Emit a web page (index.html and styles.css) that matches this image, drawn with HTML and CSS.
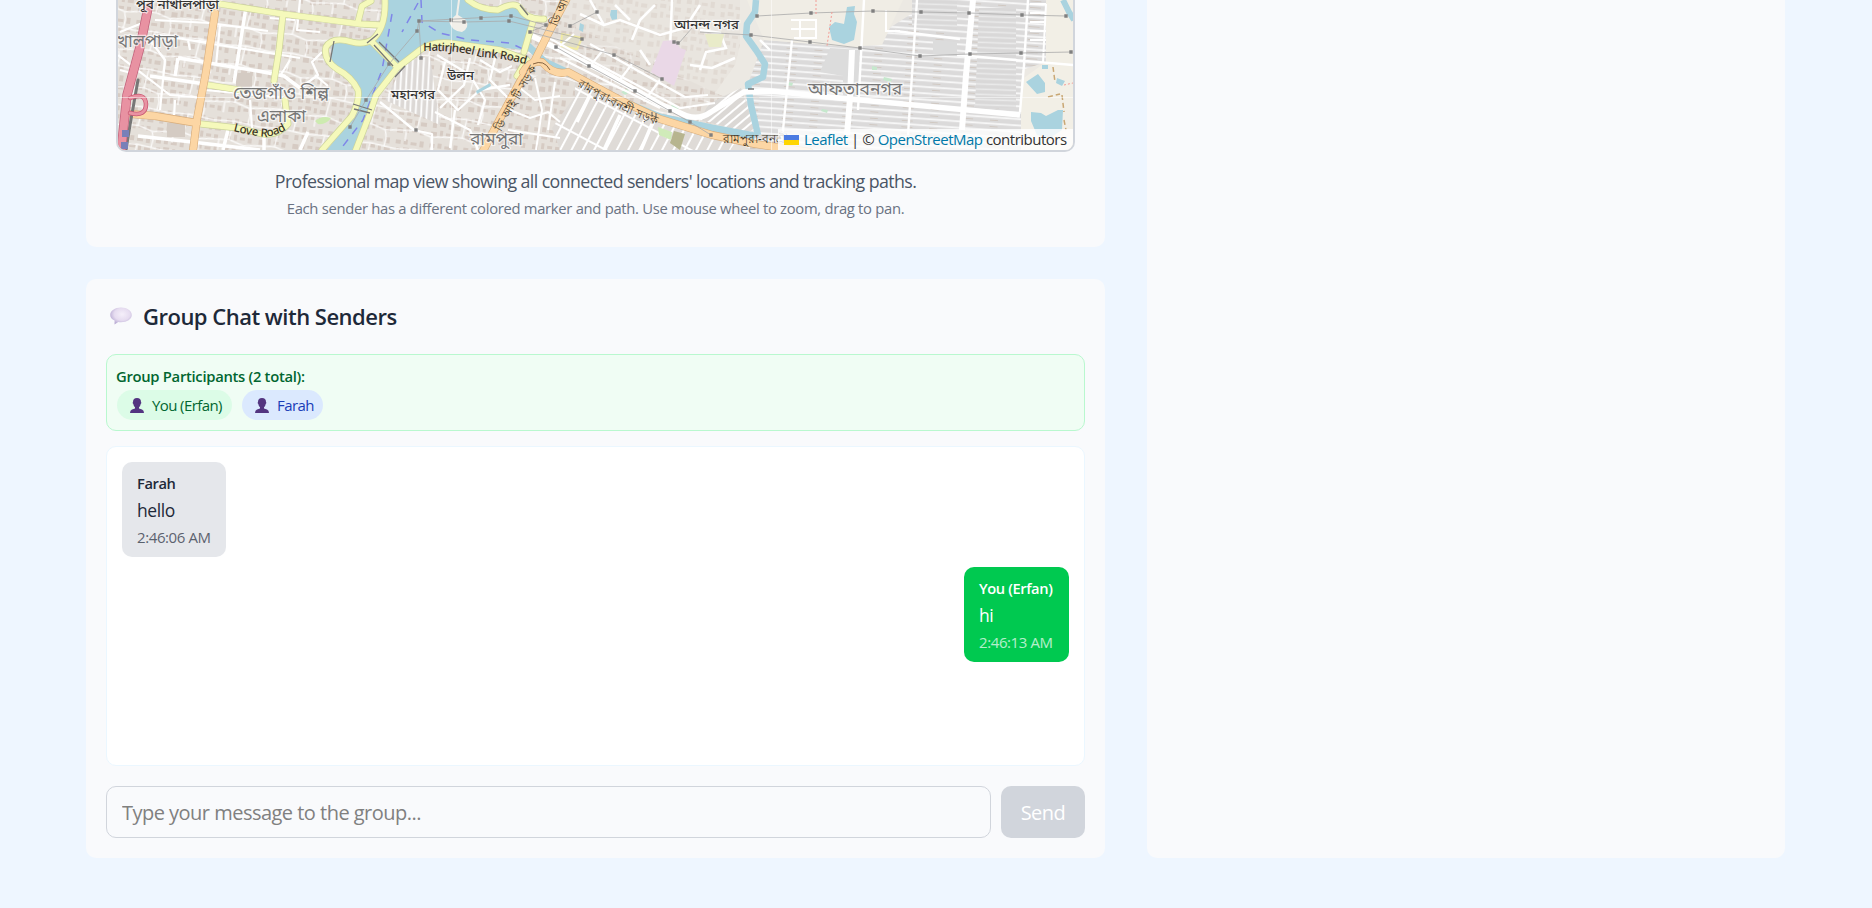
FILE: index.html
```html
<!DOCTYPE html>
<html lang="en">
<head>
<meta charset="utf-8">
<title>Group Chat</title>
<link rel="stylesheet" href="styles.css">
</head>
<body>
<main class="layout">
  <div class="column">
    <section class="card map-card">
      <div class="map">
        <svg class="tiles" viewBox="118 0 955 150" width="955" height="150">
          <defs>
            <pattern id="blocks" width="34" height="29" patternUnits="userSpaceOnUse" patternTransform="rotate(7)">
              <rect width="34" height="29" fill="#e5e0da"/>
              <path d="M2 3h5v4h-5zM10 2h4v5h-4zM17 4h6v3h-6zM26 2h4v6h-4zM3 11h4v5h-4zM10 10h6v4h-6zM19 11h3v5h-3zM25 12h6v4h-6zM2 20h6v5h-6zM11 18h3v6h-3zM17 20h5v3h-5zM25 20h4v5h-4z" fill="#d6cbc3"/>
            </pattern>
            <pattern id="lanes" width="46" height="38" patternUnits="userSpaceOnUse" patternTransform="rotate(9)">
              <path d="M0 9L20 7L46 9M20 7L18 26M0 28L18 26L33 30L46 28M33 30L35 38M35 0L34 9M8 28V38" fill="none" stroke="#fff" stroke-opacity=".8" stroke-width="1.4"/>
            </pattern>
            <pattern id="rows" width="60" height="6.4" patternUnits="userSpaceOnUse" patternTransform="rotate(4)">
              <rect width="60" height="6.4" fill="#dbdada"/>
              <path d="M0 3H60" stroke="#f8f8f8" stroke-width="1.7"/>
              <path d="M8 6H19M36 6H44" stroke="#d0c8c1"/>
            </pattern>
            <pattern id="fine" width="60" height="5.2" patternUnits="userSpaceOnUse" patternTransform="rotate(2)">
              <rect width="60" height="5.2" fill="#d9d8d8"/>
              <path d="M0 3H60" stroke="#eaeaea" stroke-width="1.5"/>
            </pattern>
            <pattern id="diag" width="10" height="40" patternUnits="userSpaceOnUse" patternTransform="rotate(28)">
              <rect width="10" height="40" fill="#dfdbd7"/>
              <path d="M5 0V40M0 8H10" stroke="#fff" stroke-width="2"/>
            </pattern>
            <pattern id="fan" width="40" height="7" patternUnits="userSpaceOnUse" patternTransform="rotate(-40)">
              <rect width="40" height="7" fill="#dbd8d5"/>
              <path d="M0 3H40" stroke="#fff" stroke-width="2"/>
            </pattern>
            <pattern id="cols" width="5.5" height="60" patternUnits="userSpaceOnUse" patternTransform="rotate(3)">
              <rect width="5.5" height="60" fill="#dcd8d5"/>
              <path d="M3 0V60" stroke="#fff" stroke-width="1.8"/>
            </pattern>
            <path id="secondary" d="M220 4L283 14L360 24L380 25M283 14L279 50L274 81M208 85L240 90M201 124L238 128L262 134Q278 136 288 124L285 100M385 0Q386 28 372 40Q363 45 352 42Q332 36 326 47Q323 60 337 69Q352 77 358 90Q360 100 352 116L322 150M372 42L397 67M420 50L397 68L376 95L369 116L355 152M420 50Q432 41 450 43L500 50L527 60M468 0Q480 10 498 10Q514 1 520 8Q526 20 544 19M358 22L362 6L371 1M533 21L524 52M524 64L517 76"/>
            <path id="primary" d="M215 13L206 72L197 119L193 151M132 114L155 116L197 123M567 -2L550 30L535 60L521 80L502 115L483 151M523 72Q530 60 542 62Q554 76 568 72L620 100L660 119L712 135L755 144L810 152"/>
          </defs>

          <!-- Land -->
          <rect x="118" width="955" height="150" fill="url(#blocks)"/>
          <rect x="118" width="955" height="150" fill="url(#lanes)"/>
          <path d="M570 0H1073V150H990L720 95L620 48L560 20Z" fill="#ece9e3"/>
          <path d="M570 0H740V45L735 65L710 100L680 112L620 80L545 45Z" fill="url(#blocks)" opacity=".5"/>
          <path d="M590 0L604 25L620 20L660 35L685 28L700 5M632 40L640 20L655 5M672 0L670 50L655 62M700 30L720 33L726 48L706 52L700 70M615 5L630 20M580 14L604 25M640 50L650 65M690 65L712 68L735 58" fill="none" stroke="#fff" stroke-width="2.5"/>
          <path d="M405 62L430 56L440 125L385 100Z" fill="url(#cols)"/>
          <path d="M764 40L860 47L925 5V0H1046V62L1022 70V150H750L745 92Z" fill="url(#rows)"/>
          <path d="M862 62L957 67L955 108L855 101Z" fill="url(#rows)"/>
          <path d="M979 8H1016V108H975Z" fill="url(#fine)"/>
          <path d="M912 0H957V30L912 27Z" fill="url(#fine)"/>
          <path d="M830 48L860 50L858 98L843 98V76L820 72Z" fill="#dcdcdc"/>
          <path d="M933 40L957 42V56L933 54Z" fill="#dcdcdc"/>
          <path d="M747 0H862V48L764 40Z" fill="#f0ede5"/>
          <path d="M862 0H903L882 45L862 46Z" fill="#f0ede5"/>
          <path d="M1046 0H1073V150H1021V80L1046 62Z" fill="#f2efe6"/>
          <path d="M720 98L741 88L756 130L745 132L700 120L708 105Z" fill="url(#fan)"/>
          <path d="M540 74L575 82L680 125L735 143L730 150H500Z" fill="url(#diag)"/>
          <path d="M540 74L575 82L575 96L552 128L560 150H490L522 85Z" fill="url(#blocks)"/>
          <path d="M520 88L535 100L560 96M510 110L530 118L548 112L560 122M535 78L542 110L536 150M508 130L560 138M555 82L548 130" fill="none" stroke="#fff" stroke-width="2"/>
          <path d="M562 34L582 38L577 49L561 46Z" fill="#dfdcc7" stroke="#f1eba4" stroke-width="2"/>
          <path d="M663 41L675 40L680 48L686 50L674 86L651 72Z" fill="#ead8e7"/>
          <path d="M705 34L724 34L721 47L709 47Z" fill="#e9ebc9"/>
          <path d="M658 127L672 132L671 140L659 135Z" fill="#d0ebb9"/><path d="M674 131L685 134L680 150L670 143Z" fill="#b7b58f"/>
          <path d="M621 92l6-3 3 3-5 3zM672 104l7 3-2 3-6-2zM788 82l5 1-1 3-5-1zM872 66l5 1v3h-5zM884 77l8 2-1 3-8-2zM822 109l6 1-1 3-6-2z" fill="#c6e8cd"/>
          <path d="M236 73h16v14h-16zM167 123h18v14h-18z" fill="#d4cbc3"/>
          <path d="M315 121Q322 115 331 118Q326 125 318 124Z" fill="#cdebb0"/>

          <!-- Local streets, west -->
          <g fill="none" stroke="#fff" stroke-linejoin="round">
            <path d="M246 7L240 45L234 83M178 58L258 71L284 76L300 88M178 58L175 76M150 76L205 84M138 136L192 142L260 150M264 133V150M228 130L223 150M300 150L308 132" stroke-width="3.5"/>
            <path d="M155 20L210 23L268 31M160 35L200 42L300 58M120 32L145 22M118 55L170 95L205 98M150 40L165 60L160 110M190 50L188 40L210 42M205 90L290 98M300 0L297 30L320 32M295 20L270 18M300 88L318 75L312 62L322 52M280 76L290 60M250 100L252 128M175 100L174 117M220 25L216 65M120 70L135 74M315 75L328 86" stroke-width="2.2"/>
            <path d="M380 102L414 130L432 134V150M437 55L470 75L485 100L478 125M445 62L438 90L458 110L480 90L510 85M470 58L464 85L440 108M495 58L490 80L510 100M435 112L470 130L478 150M455 110L450 148M480 60L500 72L512 66" stroke-width="2.3"/>
          </g>

          <!-- Water -->
          <g fill="#aad3df">
            <path d="M388 0H466Q475 10 500 10Q512 4 520 8L533 22L529 40L522 50Q470 43 440 43Q424 45 405 62L379 95L357 150H327L353 116Q363 95 354 82Q333 67 331 57L332 40Q356 48 370 45Q384 33 387 18Z"/>
            <path d="M526 44L545 62L575 76L622 101L660 117L712 128L755 136" fill="none" stroke="#aad3df" stroke-width="7"/>
            <path d="M756 0L755 12L747 24L746 36L756 50L765 64L763 77L748 84L751 105L758 135" fill="none" stroke="#aad3df" stroke-width="6.5" stroke-linejoin="round"/>
            <path d="M1063 0L1069 12L1074 20" fill="none" stroke="#aad3df" stroke-width="6"/>
            <path d="M611 10h6v9l-5 1-2-5zM580 23l4 2-1 7-4-2zM476 91l14-8 1 3-9 5-5 3zM847 7l8-1-1 8 3 8-3 18-10 4-12-4-3-13 6-5 9 2z"/>
            <path d="M1026 82l12-8 7 9v9l-8 2zM1031 112l10 1 5 3 12-6 5 0-1 20-12 8-13-3-6-14zM1057 78l8 3-3 5-6-3zM1042 65h6v4h-6z"/>
          </g>
          <path d="M458 0L456 15L449 21Q451 31 462 32Q470 28 466 20L458 15L460 0" fill="#f2efe9"/>
          <path d="M392 14L382 70L363 120L340 150M421 0L422 22L440 33L470 40L510 43L523 49M418 3L402 32" fill="none" stroke="#7f86e8" stroke-width="1.5" stroke-dasharray="8 7"/>

          <!-- Canal-side and eastern streets -->
          <g fill="none" stroke="#fff">
            <path d="M532 36L600 70L660 104L687 116Q700 120 711 112L744 92L770 91L850 99L1020 115" stroke-width="5.5"/>
            <path d="M545 36L650 92L680 108L715 103M560 58L660 108M560 46L574 34M590 66L604 49M619 81L632 64M648 96L660 80M590 44L685 97L708 95" stroke-width="2.2"/>
            <path d="M864 0L858 110M917 0L908 135M1028 0L1024 65L1020 112M957 55L1073 65M792 40L782 140M770 50L760 40M895 31L960 39" stroke-width="2.4"/>
            <path d="M852 50L850 98L847 135M973 0L966 75L962 130" stroke-width="6"/>
            <path d="M1046 4L1043 62M1030 4H1046M1030 13H1046M1030 22H1046M1030 31H1046M1030 40H1046M791 20H816V38H794M800 20V38M791 29H816M886 10V31H900" stroke-width="2"/>
            <path d="M590 95L577 122M620 115L604 150M652 124L641 150" stroke-width="3.5"/>
          </g>

          <!-- Main roads: casing, then fill -->
          <g fill="none" stroke-linejoin="round" stroke-linecap="round">
            <use href="#secondary" stroke="#ccd49b" stroke-width="6.8"/>
            <use href="#secondary" stroke="#f5f9bb" stroke-width="5.4"/>
            <use href="#primary" stroke="#d8ad7b" stroke-width="8"/>
            <use href="#primary" stroke="#fcd6a4" stroke-width="6.8"/>
            <path d="M138 80L130 125L126 150" stroke="#777" stroke-width="3"/>
            <path d="M148 8L140 47L127 95L121 152" stroke="#c0607a" stroke-width="9.4"/>
            <path d="M148 8L140 47L127 95L121 152" stroke="#e892a2" stroke-width="8"/>
            <path d="M130 98Q145 92 146 104Q146 117 130 113" stroke="#c95772" stroke-width="4.5"/>
            <path d="M130 98Q145 92 146 104Q146 117 130 113" stroke="#e892a2" stroke-width="3"/>
          </g>
          <path d="M122 130h7v7h-7zM121 142h7v7h-7z" fill="#7780b8"/>

          <!-- Bridges -->
          <path d="M334 41L330 62M374 45L393 66M379 42L399 62M353 104L372 110M354 109L370 113M378 34L367 43M405 66L395 77M520 5L528 15M748 89H754M652 112V117M656 113V118" fill="none" stroke="#777" stroke-width="1.3"/>
          <path d="M533 64Q544 59 550 70" fill="none" stroke="#846340"/>

          <!-- Power lines -->
          <path d="M350 127L366 100L389 64L417 31L419 21L511 16L546 25L530 32L615 55L662 79M421 58L419 21L464 22L509 21L582 39M570 26L597 12M556 47L589 66L635 91L670 111L690 122L711 135M674 42L679 43L692 28M757 16L811 13L873 11L921 12L969 13L1022 15L1066 16M700 32L751 35L810 42L860 48L920 56L970 54L1021 53L1071 52" fill="none" stroke="#aaa" stroke-width=".8"/>
          <path d="M366 100h0M350 127h0M389 64h0M417 31h0M419 21h0M451 20h0M464 22h0M481 18h0M511 16h0M509 21h0M421 58h0M530 32h0M546 25h0M570 26h0M597 12h0M582 39h0M614 55h0M662 79h0M556 47h0M589 66h0M635 91h0M670 111h0M690 122h0M711 135h0M416 130h0M674 42h0M678 43h0M757 16h0M811 13h0M873 11h0M921 12h0M969 13h0M1022 15h0M1066 16h0M751 35h0M810 42h0M860 48h0M920 56h0M970 54h0M1021 53h0M1071 52h0" stroke="#808080" stroke-width="3.4" stroke-linecap="square"/>
          <path d="M816 0V16M832 12L827 46M1064 85L1073 83" fill="none" stroke="#f39c95" stroke-dasharray="2 2"/>
          <path d="M1053 67L1055 82M1062 95L1064 112M1048 97L1060 94M1064 120L1066 130" fill="none" stroke="#c9a774" stroke-width="1.5" stroke-dasharray="5 3"/>

          <!-- Tile seams -->
          <path d="M118 97.5H1073M451.5 0V150M771.5 0V150" stroke="#fff" stroke-opacity=".5"/>

          <!-- Place names -->
          <g class="place">
            <text x="136" y="9" textLength="83" lengthAdjust="spacingAndGlyphs">পূর্ব নাখালপাড়া</text>
            <text x="391" y="99" textLength="44" lengthAdjust="spacingAndGlyphs">মহানগর</text>
            <text x="447" y="80" textLength="27" lengthAdjust="spacingAndGlyphs">উলন</text>
            <text x="674" y="29" textLength="65" lengthAdjust="spacingAndGlyphs">আনন্দ নগর</text>
          </g>
          <g class="place district">
            <text x="117" y="47" textLength="61" lengthAdjust="spacingAndGlyphs">খালপাড়া</text>
            <text x="233" y="99" textLength="96" lengthAdjust="spacingAndGlyphs">তেজগাঁও শিল্প</text>
            <text x="257" y="122" textLength="49" lengthAdjust="spacingAndGlyphs">এলাকা</text>
            <text x="470" y="145" textLength="53" lengthAdjust="spacingAndGlyphs">রামপুরা</text>
            <text x="808" y="95" textLength="94" lengthAdjust="spacingAndGlyphs">আফতাবনগর</text>
          </g>
          <defs>
            <path id="link-road" d="M423 51Q460 50 480 57Q505 58 528 65"/>
            <path id="love-road" d="M233 131Q252 136 266 137Q282 134 290 127"/>
            <path id="dit-road" d="M501 132L538 67"/>
            <path id="dit-north" d="M557 27L571 -5"/>
            <path id="bonosree" d="M577 86L622 111L658 126"/>
          </defs>
          <g class="road">
            <text><textPath href="#link-road" textLength="104">Hatirjheel Link Road</textPath></text>
            <text><textPath href="#love-road" textLength="55">Love Road</textPath></text>
            <text><textPath href="#dit-road" textLength="73" lengthAdjust="spacingAndGlyphs">ডি আই টি সড়ক</textPath></text>
            <text><textPath href="#dit-north">ডি আই টি</textPath></text>
            <text><textPath href="#bonosree" textLength="88" lengthAdjust="spacingAndGlyphs">রামপুরা-বনশ্রী সড়ক</textPath></text>
            <text x="723" y="143">রামপুরা-বনশ্রী</text>
          </g>
        </svg>
        <div class="attribution">
          <svg class="flag" viewBox="0 0 15 10" width="15" height="10"><path fill="#4c7be1" d="M0 0h15v5H0z"/><path fill="#ffd500" d="M0 5h15v5H0z"/></svg>
          <span class="attribution-text"><a>Leaflet</a> | © <a>OpenStreetMap</a> contributors</span>
        </div>
      </div>
      <p class="caption"><span class="caption-text">Professional map view showing all connected senders' locations and tracking paths.</span></p>
      <p class="hint"><span class="hint-text">Each sender has a different colored marker and path. Use mouse wheel to zoom, drag to pan.</span></p>
    </section>

    <section class="card chat-card">
      <h2 class="title">
        <svg class="bubble-icon" viewBox="0 0 22 18" width="22" height="18">
          <defs><radialGradient id="bubble" cx=".55" cy=".4" r=".6"><stop offset="0" stop-color="#f5effa"/><stop offset=".6" stop-color="#e6dcf0"/><stop offset="1" stop-color="#b9abd3"/></radialGradient></defs>
          <path d="M11 .5C17 .5 21.8 3.8 21.8 8S17 15.2 11 15.2Q9.500 15.2 8.300 15L4.500 17.400L4.600 13.600Q.3 11.500.2 8C.2 3.800 5 .5 11 .5Z" fill="url(#bubble)"/>
        </svg>
        <span class="title-text">Group Chat with Senders</span>
      </h2>
      <div class="participants">
        <div class="participants-label">Group Participants (2 total):</div>
        <div class="chips">
          <span class="chip chip-self"><svg class="person" viewBox="0 0 14 15" width="14" height="15"><path d="M7 0Q11 0 11 4Q12 5 10.700 6Q10.300 8.500 9 9.200V10.500L12 11.500Q14 12 14 15H0Q0 12 2 11.500L5 10.500V9.200Q3.700 8.500 3.300 6Q2 5 3 4Q3 0 7 0Z" fill="#533580"/></svg><span class="self-name">You (Erfan)</span></span>
          <span class="chip chip-peer"><svg class="person" viewBox="0 0 14 15" width="14" height="15"><path d="M7 0Q11 0 11 4Q12 5 10.700 6Q10.300 8.500 9 9.200V10.500L12 11.500Q14 12 14 15H0Q0 12 2 11.500L5 10.500V9.200Q3.700 8.500 3.300 6Q2 5 3 4Q3 0 7 0Z" fill="#533580"/></svg><span class="peer-name">Farah</span></span>
        </div>
      </div>
      <div class="messages">
        <div class="message message-in">
          <div class="sender">Farah</div>
          <div class="body">hello</div>
          <div class="time">2:46:06 AM</div>
        </div>
        <div class="message message-out">
          <div class="sender">You (Erfan)</div>
          <div class="body">hi</div>
          <div class="time">2:46:13 AM</div>
        </div>
      </div>
      <div class="composer">
        <input class="entry" type="text" placeholder="Type your message to the group...">
        <button class="send" disabled>Send</button>
      </div>
    </section>
  </div>
  <aside class="card side-card"></aside>
</main>
</body>
</html>
```
FILE: styles.css
```css
* { box-sizing: border-box; }
body {
  margin: 0;
  height: 908px;
  overflow: hidden;
  background: #eef6ff;
  font-family: "Open Sans", "Noto Sans", sans-serif;
  color: #1e2939;
}
.layout {
  display: flex;
  gap: 42px;
  height: 858px;
  padding: 0 87px 0 86px;
}
.column {
  display: flex;
  flex-direction: column;
  gap: 32px;
  width: 1019px;
}
.card { background: #f9fafc; border-radius: 10px; }
.map-card {
  height: 247px;
  padding: 0 30px;
  border-radius: 0 0 10px 10px;
  text-align: center;
}
.side-card { flex: 1; border-radius: 0 0 10px 10px; }
.map {
  position: relative;
  height: 152px;
  border: 2px solid #d1d5dc;
  border-top: 0;
  border-radius: 0 0 10px 10px;
  overflow: hidden;
}
.tiles { display: block; }
.place {
  font: 500 13px "Noto Sans Bengali", "Noto Sans", sans-serif;
  fill: #333;
  stroke: #fff;
  stroke-opacity: .65;
  stroke-width: 2.5px;
  paint-order: stroke;
}
.district { font-size: 17px; font-weight: 400; fill: #777; }
.road {
  font: 500 11.5px "Noto Sans", sans-serif;
  fill: #3a3325;
}
.attribution {
  position: absolute;
  right: 0;
  bottom: 0;
  display: flex;
  align-items: center;
  gap: 5px;
  width: 295px;
  height: 21px;
  padding-left: 6px;
  background: rgba(255, 255, 255, .8);
  color: #333;
  font-size: 15px;
  line-height: 21px;
  white-space: nowrap;
}
.attribution a { color: #0078a8; }
.attribution-text { letter-spacing: -.5px; }
.caption, .hint { margin: 0; white-space: nowrap; }
.caption {
  padding-top: 14px;
  color: #4a5565;
  font-size: 17.8px;
  line-height: 30px;
}
.caption-text { letter-spacing: -.6px; }
.hint {
  color: #6a7282;
  font-size: 14.8px;
  line-height: 24px;
}
.hint-text { letter-spacing: -.3px; }
.chat-card {
  display: flex;
  flex-direction: column;
  height: 579px;
  padding: 20px;
}
.title {
  display: flex;
  align-items: center;
  gap: 11px;
  height: 34px;
  margin: 0 0 21px;
  padding-left: 4px;
  color: #1e2939;
  font-size: 22px;
  font-weight: 600;
  white-space: nowrap;
}
.title-text { letter-spacing: -.5px; }
.participants {
  height: 77px;
  margin-bottom: 15px;
  padding: 9px;
  border: 1px solid #b9f8cf;
  border-radius: 10px;
  background: #f0fdf4;
}
.participants-label {
  height: 26px;
  color: #016630;
  font-size: 14.8px;
  font-weight: 600;
  line-height: 24px;
  letter-spacing: -.3px;
}
.chips { display: flex; gap: 10px; padding-left: 1px; }
.chip {
  display: flex;
  align-items: center;
  gap: 8px;
  height: 30px;
  padding-left: 13px;
  border-radius: 15px;
  font-size: 15px;
  letter-spacing: -.6px;
  white-space: nowrap;
}
.chip-self { width: 115px; background: #dcfce7; color: #016630; }
.chip-peer { width: 81px; background: #dbe9fe; color: #193cb8; }
.messages {
  display: flex;
  flex-direction: column;
  gap: 10px;
  height: 320px;
  margin-bottom: 20px;
  padding: 15px;
  border: 1px solid #ebf7ff;
  border-radius: 10px;
  background: #fff;
}
.message {
  height: 95px;
  padding: 8px 15px;
  border-radius: 10px;
  white-space: nowrap;
}
.message-in { align-self: flex-start; width: 104px; background: #e5e7eb; color: #1e2939; }
.message-out { align-self: flex-end; width: 105px; background: #00c950; color: #fff; }
.sender { font-size: 14.7px; font-weight: 600; line-height: 26px; letter-spacing: -.4px; }
.body { font-size: 17.5px; line-height: 29px; letter-spacing: -.4px; }
.time { font-size: 15px; line-height: 24px; letter-spacing: -.4px; opacity: .7; }
.composer { display: flex; gap: 10px; height: 52px; }
.entry {
  flex: 1;
  padding: 0 15px;
  border: 1px solid #d1d5dc;
  border-radius: 10px;
  background: transparent;
  font: 20px "Open Sans", sans-serif;
  letter-spacing: -.52px;
}
.entry::placeholder { color: #808080; opacity: 1; }
.send {
  width: 84px;
  padding: 0;
  border: 0;
  border-radius: 10px;
  background: #d1d5dc;
  color: #fff;
  font: 20px "Open Sans", sans-serif;
  letter-spacing: -.5px;
}
```
